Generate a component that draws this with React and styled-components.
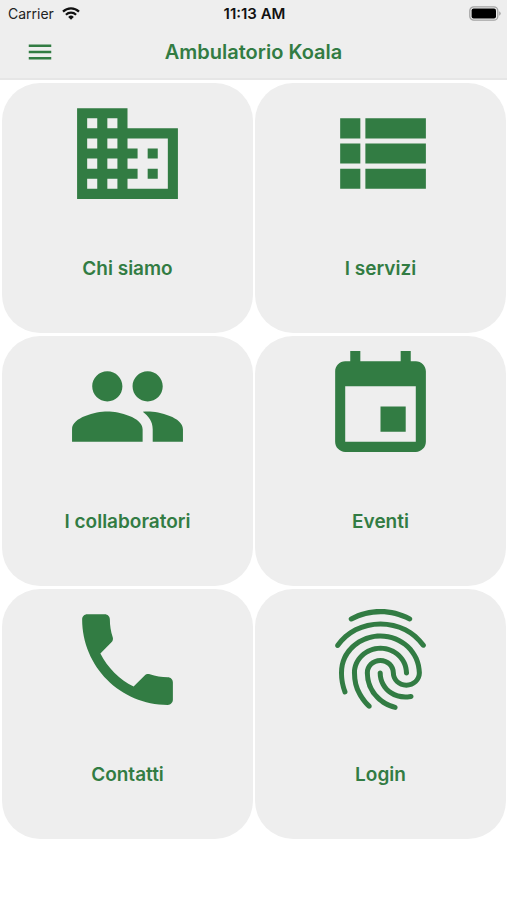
import React from "react";
import styled, { createGlobalStyle } from "styled-components";
import { MdMenu, MdFingerprint } from "react-icons/md";

const green = "#327c43";
const surface = "#eeeeee";

const GlobalStyle = createGlobalStyle`
  *, *::before, *::after { box-sizing: border-box; }
  body {
    margin: 0;
    background: #ffffff;
    font-family: Inter, "Liberation Sans", sans-serif;
  }
`;

const Header = styled.header`
  background: ${surface};
  border-bottom: 2px solid #e6e6e6;
`;

const StatusBar = styled.div`
  display: grid;
  grid-template-columns: 1fr auto 1fr;
  align-items: center;
  height: 27px;
  padding: 0 6px 0 8px;
  font-size: 14px;
  line-height: 20px;
  color: #222222;
`;

const Carrier = styled.div`
  display: flex;
  align-items: center;
  gap: 8px;
`;

const Clock = styled.time`
  font-size: 15px;
  font-weight: 600;
  color: #111111;
`;

const BatterySlot = styled.div`
  display: flex;
  justify-content: flex-end;
`;

const NavBar = styled.div`
  display: grid;
  grid-template-columns: 1fr auto 1fr;
  align-items: center;
  height: 51px;
  padding: 0 25px 2px;
  color: ${green};
`;

const MenuButton = styled.button`
  display: flex;
  justify-self: start;
  padding: 0;
  border: 0;
  background: none;
  color: inherit;
  cursor: pointer;
`;

const Title = styled.h1`
  margin: 0;
  font-size: 20px;
  line-height: 24px;
  font-weight: 600;
`;

const TileGrid = styled.main`
  display: grid;
  grid-template-columns: 1fr 1fr;
  gap: 3px 2px;
  padding: 3px 1px 3px 2px;
`;

const Tile = styled.a`
  display: flex;
  flex-direction: column;
  align-items: center;
  gap: 43px;
  height: 250px;
  padding-top: 10px;
  border-radius: 38px;
  background: ${surface};
  color: ${green};
  text-decoration: none;
`;

const TileLabel = styled.span`
  font-size: 19px;
  line-height: 24px;
  font-weight: 600;
`;

const Glyph = ({ d }) => (
  <svg width="121" height="121" viewBox="0 0 24 24" fill="currentColor" aria-hidden="true">
    <path d={d} />
  </svg>
);

const WifiIcon = () => (
  <svg width="18" height="14" viewBox="0 0 18 14" fill="none" stroke="#111111" strokeWidth="2.2" role="img" aria-label="Wi-Fi">
    <path d="M1 4.6a11.6 11.6 0 0 1 16 0" />
    <path d="M3.9 7.7a7.4 7.4 0 0 1 10.2 0" />
    <path d="M9 12.7L6.2 9.9a4 4 0 0 1 5.6 0z" fill="#111111" stroke="none" />
  </svg>
);

const BatteryIcon = () => (
  <svg width="32" height="15" viewBox="0 0 32 15" role="img" aria-label="Battery full">
    <rect x="0.8" y="0.8" width="28" height="13.4" rx="4" fill="none" stroke="#a3a3a3" strokeWidth="1.3" />
    <rect x="2.6" y="2.6" width="24.4" height="9.8" rx="2" fill="#000000" />
    <path d="M30.2 5.3q1.5.7 1.5 2.2t-1.5 2.2z" fill="#a3a3a3" />
  </svg>
);

const tiles = [
  {
    id: "chi-siamo",
    label: "Chi siamo",
    icon: <Glyph d="M12 7V3H2v18h20V7H12zM6 19H4v-2h2v2zm0-4H4v-2h2v2zm0-4H4V9h2v2zm0-4H4V5h2v2zm4 12H8v-2h2v2zm0-4H8v-2h2v2zm0-4H8V9h2v2zm0-4H8V5h2v2zm10 12h-8v-2h2v-2h-2v-2h2v-2h-2V9h8v10zm-2-8h-2v2h2v-2zm0 4h-2v2h2v-2z" />,
  },
  {
    id: "servizi",
    label: "I servizi",
    icon: <Glyph d="M4 14h4v-4H4v4zm0 5h4v-4H4v4zM4 9h4V5H4v4zm5 5h12v-4H9v4zm0 5h12v-4H9v4zM9 5v4h12V5H9z" />,
  },
  {
    id: "collaboratori",
    label: "I collaboratori",
    icon: <Glyph d="M16 11c1.66 0 2.99-1.34 2.99-3S17.66 5 16 5c-1.66 0-3 1.34-3 3s1.34 3 3 3zm-8 0c1.66 0 2.99-1.34 2.99-3S9.66 5 8 5C6.34 5 5 6.34 5 8s1.34 3 3 3zm0 2c-2.33 0-7 1.17-7 3.5V19h14v-2.5c0-2.33-4.67-3.5-7-3.5zm8 0c-.29 0-.62.02-.97.05 1.16.84 1.97 1.97 1.97 3.45V19h6v-2.5c0-2.33-4.67-3.5-7-3.5z" />,
  },
  {
    id: "eventi",
    label: "Eventi",
    icon: <Glyph d="M17 12h-5v5h5v-5zM16 1v2H8V1H6v2H5c-1.11 0-1.99.9-1.99 2L3 19c0 1.1.89 2 2 2h14c1.1 0 2-.9 2-2V5c0-1.1-.9-2-2-2h-1V1h-2zm3 18H5V8h14v11z" />,
  },
  {
    id: "contatti",
    label: "Contatti",
    icon: <Glyph d="M6.62 10.79c1.44 2.83 3.76 5.14 6.59 6.59l2.2-2.2c.27-.27.67-.36 1.02-.24 1.12.37 2.33.57 3.57.57.55 0 1 .45 1 1V20c0 .55-.45 1-1 1-9.39 0-17-7.61-17-17 0-.55.45-1 1-1h3.5c.55 0 1 .45 1 1 0 1.25.2 2.45.57 3.57.11.35.03.74-.25 1.02l-2.2 2.2z" />,
  },
  { id: "login", label: "Login", icon: <MdFingerprint size={121} aria-hidden="true" /> },
];

export default function App() {
  return (
    <>
      <GlobalStyle />
      <Header>
        <StatusBar>
          <Carrier>
            <span>Carrier</span>
            <WifiIcon />
          </Carrier>
          <Clock dateTime="11:13">11:13 AM</Clock>
          <BatterySlot>
            <BatteryIcon />
          </BatterySlot>
        </StatusBar>
        <NavBar>
          <MenuButton type="button" aria-label="Menu">
            <MdMenu size={30} />
          </MenuButton>
          <Title>Ambulatorio Koala</Title>
        </NavBar>
      </Header>
      <TileGrid>
        {tiles.map(({ id, label, icon }) => (
          <Tile key={id} href={`#${id}`}>
            {icon}
            <TileLabel>{label}</TileLabel>
          </Tile>
        ))}
      </TileGrid>
    </>
  );
}
